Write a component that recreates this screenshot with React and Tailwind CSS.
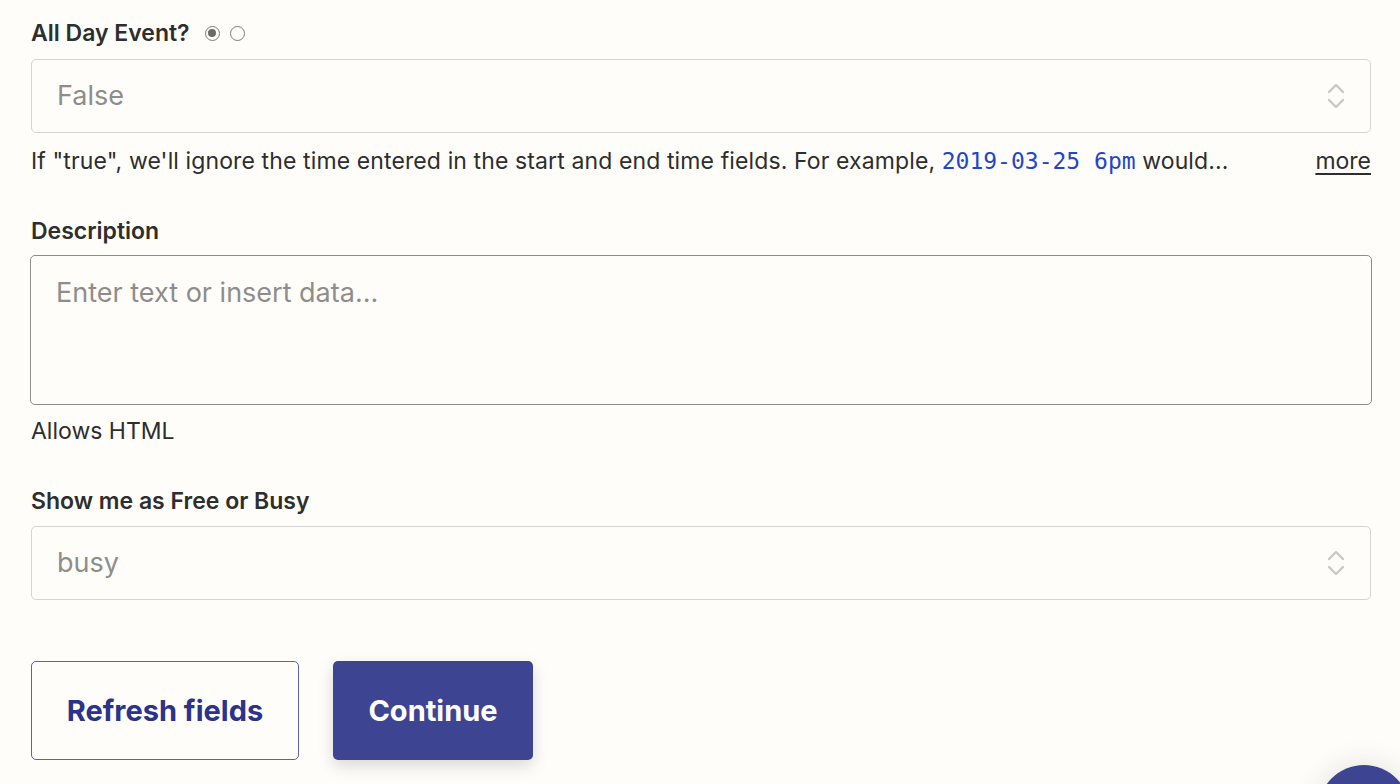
import { useState } from "react";

const inter = { fontFamily: "Inter, 'Noto Sans', sans-serif" };

function Chevrons() {
  return (
    <svg width="20" height="30" viewBox="0 0 20 30" fill="none" stroke="#cac8c4" strokeWidth="2.4" strokeLinecap="round" strokeLinejoin="round">
      <path d="M3 11 L10 4 L17 11" />
      <path d="M3 19 L10 26 L17 19" />
    </svg>
  );
}

function SelectBox({ value }) {
  return (
    <div className="flex h-[74px] items-center justify-between rounded-[5px] border border-[#d6d4d0] bg-[#fffdf9] pl-[25px] pr-[24px]">
      <span className="text-[27px] text-[#8e8d8b]">{value}</span>
      <Chevrons />
    </div>
  );
}

function Label({ children }) {
  return <div className="text-[23px] font-semibold leading-[24px] text-[#2d2e2e]">{children}</div>;
}

export default function App() {
  const [allDay, setAllDay] = useState(true);

  return (
    <div className="relative h-[784px] overflow-hidden bg-[#fffdf9] text-[#2d2e2e]" style={inter}>
      <div className="px-[31px] pt-[21px] pr-[29px]">
        <div className="flex items-center gap-[15px]">
          <Label>All Day Event?</Label>
          <div className="flex items-center gap-[10px]">
            <button
              onClick={() => setAllDay(true)}
              className="flex h-[15px] w-[15px] items-center justify-center rounded-full border border-[#7d7c7a]"
            >
              {allDay && <span className="h-[8px] w-[8px] rounded-full bg-[#6b6a68]" />}
            </button>
            <button
              onClick={() => setAllDay(false)}
              className="flex h-[15px] w-[15px] items-center justify-center rounded-full border border-[#7d7c7a]"
            >
              {!allDay && <span className="h-[8px] w-[8px] rounded-full bg-[#6b6a68]" />}
            </button>
          </div>
        </div>

        <div className="mt-[14px]">
          <SelectBox value="False" />
        </div>

        <div className="mt-[13px] flex items-baseline justify-between text-[23px] leading-[30px]">
          <p className="tracking-[0.005em]">
            If "true", we'll ignore the time entered in the start and end time fields. For example,{" "}
            <code className="text-[23px] tracking-normal text-[#1f47c7]" style={{ fontFamily: "'DejaVu Sans Mono', monospace" }}>
              2019-03-25 6pm
            </code>{" "}
            would...
          </p>
          <a className="underline underline-offset-4" href="#">more</a>
        </div>

        <div className="mt-[43px]">
          <Label>Description</Label>
        </div>
        <div className="mt-[12px] -mx-px h-[150px] rounded-[5px] border-[1.5px] border-[#8e8d8b] bg-[#fffdf9] px-[25px] pt-[17px]">
          <span className="text-[27px] text-[#8e8d8b]">Enter text or insert data...</span>
        </div>
        <div className="mt-[11px] text-[23px] leading-[30px]">Allows HTML</div>

        <div className="mt-[43px]">
          <Label>Show me as Free or Busy</Label>
        </div>
        <div className="mt-[13px]">
          <SelectBox value="busy" />
        </div>

        <div className="mt-[61px] flex gap-[34px]">
          <button className="h-[99px] w-[268px] rounded-[5px] border border-[#5a61ad] bg-[#fffdf9] text-[29px] font-bold text-[#2b338a]">
            Refresh fields
          </button>
          <button className="h-[99px] w-[200px] rounded-[5px] bg-[#3d4592] text-[29px] font-bold text-white shadow-[0_6px_16px_rgba(0,0,0,0.15)]">
            Continue
          </button>
        </div>
      </div>

      <div className="absolute left-[1318px] top-[765px] h-[92px] w-[92px] rounded-full bg-[#3d4592] shadow-[0_0_30px_rgba(0,0,0,0.12)]" />
    </div>
  );
}
